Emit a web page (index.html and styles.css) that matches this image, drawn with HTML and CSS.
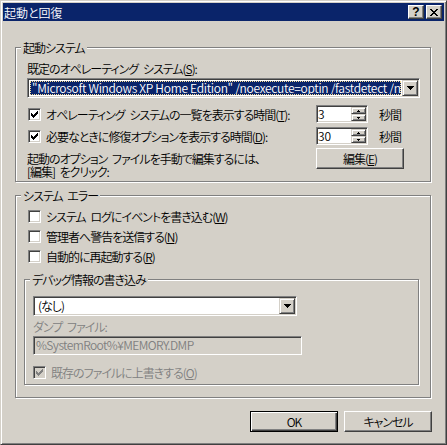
FILE: index.html
```html
<!DOCTYPE html>
<html lang="ja">
  <head>
    <meta charset="UTF-8" />
    <meta name="viewport" content="width=device-width, initial-scale=1.0" />
    <title>起動と回復</title>
    <link rel="stylesheet" href="styles.css">
  </head>
  <body>
    <div class="window">
      <div class="titlebar">
        <span class="title">起動と回復</span>
        <div class="title-buttons">
          <button class="title-btn help">?</button>
          <button class="title-btn close">
            <svg width="8" height="7" viewBox="0 0 8 7">
              <path d="M0 0h2v1h-2z M6 0h2v1h-2z M1 1h2v1h-2z M5 1h2v1h-2z M2 2h4v1h-4z M3 3h2v1h-2z M2 4h4v1h-4z M1 5h2v1h-2z M5 5h2v1h-2z M0 6h2v1h-2z M6 6h2v1h-2z" />
            </svg>
          </button>
        </div>
      </div>

      <div class="client">
        <!-- 起動システム -->
        <fieldset class="group">
          <legend>起動システム</legend>
          <div class="boot">
            <div>既定のオペレーティング システム(<u>S</u>):</div>
            <div class="combo">
              <div class="combo-text focused">"Microsoft Windows XP Home Edition" /noexecute=optin /fastdetect /noguiboot</div>
              <div class="combo-btn">
                <svg width="7" height="4" viewBox="0 0 7 4"><path d="M0 0h7v1h-1v1h-1v1h-1v1h-1v-1h-1v-1h-1v-1h-1z" /></svg>
              </div>
            </div>

            <div class="timer-row first">
              <div class="check-item timer-label">
                <span class="check">
                  <svg width="11" height="11" viewBox="1 1 11 11"><path d="M3 5h1v1h1v1h1v-1h1v-1h1v-1h1v-1h1v3h-1v1h-1v1h-1v1h-1v1h-1v-1h-1v-1h-1z" /></svg>
                </span>
                <span>オペレーティング システムの一覧を表示する時間(<u>T</u>):</span>
              </div>
              <div class="spin">
                <div class="spin-edit">3</div>
                <div class="spin-btns">
                  <div class="spin-btn"><svg width="3" height="2" viewBox="0 0 3 2"><path d="M1 0h1v1h1v1h-3v-1h1z" /></svg></div>
                  <div class="spin-btn"><svg width="3" height="2" viewBox="0 0 3 2"><path d="M0 0h3v1h-1v1h-1v-1h-1z" /></svg></div>
                </div>
              </div>
              <span class="unit">秒間</span>
            </div>

            <div class="timer-row">
              <div class="check-item timer-label">
                <span class="check">
                  <svg width="11" height="11" viewBox="1 1 11 11"><path d="M3 5h1v1h1v1h1v-1h1v-1h1v-1h1v-1h1v3h-1v1h-1v1h-1v1h-1v1h-1v-1h-1v-1h-1z" /></svg>
                </span>
                <span>必要なときに修復オプションを表示する時間(<u>D</u>):</span>
              </div>
              <div class="spin">
                <div class="spin-edit">30</div>
                <div class="spin-btns">
                  <div class="spin-btn"><svg width="3" height="2" viewBox="0 0 3 2"><path d="M1 0h1v1h1v1h-3v-1h1z" /></svg></div>
                  <div class="spin-btn"><svg width="3" height="2" viewBox="0 0 3 2"><path d="M0 0h3v1h-1v1h-1v-1h-1z" /></svg></div>
                </div>
              </div>
              <span class="unit">秒間</span>
            </div>

            <div class="edit-row">
              <div class="edit-note">起動のオプション ファイルを手動で編集するには、<br>[編集] をクリック:</div>
              <button class="btn">編集(<u>E</u>)</button>
            </div>
          </div>
        </fieldset>

        <!-- システム エラー -->
        <fieldset class="group errors">
          <legend>システム エラー</legend>
          <div class="checks">
            <div class="check-item">
              <span class="check"></span>
              <span>システム ログにイベントを書き込む(<u>W</u>)</span>
            </div>
            <div class="check-item">
              <span class="check"></span>
              <span>管理者へ警告を送信する(<u>N</u>)</span>
            </div>
            <div class="check-item">
              <span class="check"></span>
              <span>自動的に再起動する(<u>R</u>)</span>
            </div>
          </div>

          <fieldset class="group debug">
            <legend>デバッグ情報の書き込み</legend>
            <div class="debug-body">
              <div class="combo small">
                <div class="combo-text">(なし)</div>
                <div class="combo-btn">
                  <svg width="7" height="4" viewBox="0 0 7 4"><path d="M0 0h7v1h-1v1h-1v1h-1v1h-1v-1h-1v-1h-1v-1h-1z" /></svg>
                </div>
              </div>
              <div class="disabled dump-label">ダンプ ファイル:</div>
              <div class="field disabled">%SystemRoot%¥MEMORY.DMP</div>
              <div class="check-item overwrite disabled">
                <span class="check off">
                  <svg width="11" height="11" viewBox="1 1 11 11"><path d="M3 5h1v1h1v1h1v-1h1v-1h1v-1h1v-1h1v3h-1v1h-1v1h-1v1h-1v1h-1v-1h-1v-1h-1z" /></svg>
                </span>
                <span>既存のファイルに上書きする(<u>O</u>)</span>
              </div>
            </div>
          </fieldset>
        </fieldset>

        <div class="actions">
          <button class="btn default">OK</button>
          <button class="btn">キャンセル</button>
        </div>
      </div>
    </div>
  </body>
</html>
```

FILE: styles.css
```css
body {
  margin: 0;
  background-color: #d4d0c8;
  font-family: "Noto Sans CJK JP", sans-serif;
  font-size: 12px;
  font-weight: 350;
  line-height: 13px;
  letter-spacing: -1px;
  word-spacing: 3px;
  font-feature-settings: "palt";
  color: #000;
}

button {
  font: inherit;
  font-feature-settings: "palt";
  letter-spacing: inherit;
  word-spacing: inherit;
  color: #000;
  padding: 0;
}

svg {
  display: block;
  shape-rendering: crispEdges;
}

.window {
  width: 447px;
  height: 445px;
  box-sizing: border-box;
  border: 1px solid;
  border-color: #d4d0c8 #404040 #404040 #d4d0c8;
  box-shadow: inset 1px 1px #fff, inset -1px -1px #808080;
  padding: 2px;
}

/* title bar */
.titlebar {
  display: flex;
  align-items: center;
  justify-content: space-between;
  height: 18px;
  padding-left: 1px;
  background-color: #0a246a;
  color: #fff;
}

.title {
  letter-spacing: 0;
}

.title-buttons {
  display: flex;
  gap: 2px;
  margin-right: 2px;
}

.title-btn {
  display: flex;
  align-items: center;
  justify-content: center;
  width: 16px;
  height: 14px;
  box-sizing: border-box;
  border: 1px solid;
  border-color: #fff #404040 #404040 #fff;
  box-shadow: inset -1px -1px #808080;
  background-color: #d4d0c8;
}

.title-btn.help {
  font-family: "Liberation Sans", sans-serif;
  font-weight: bold;
  font-size: 12px;
  line-height: 1;
  letter-spacing: 0;
}

/* client area */
.client {
  padding: 20px 13px 0 12px;
}

.group {
  margin: 0;
  padding: 0;
  min-width: 0;
  border: 1px solid #808080;
  box-shadow: inset 1px 1px #fff, 1px 1px #fff;
}

.group legend {
  margin-left: 5px;
  padding: 0 2px;
  line-height: 13px;
  background-color: #d4d0c8;
}

.errors {
  margin-top: 7px;
}

.boot {
  padding: 8px 10px 3px 11px;
}

.checks {
  display: flex;
  flex-direction: column;
  gap: 3px;
  padding: 6px 0 0 11px;
}

.debug {
  margin: 8px 11px 12px 8px;
}

.debug-body {
  padding: 10px 0 3px 8px;
}

/* controls */
.combo {
  display: flex;
  height: 20px;
  box-sizing: border-box;
  margin-top: 3px;
  padding: 1px;
  border: 1px solid;
  border-color: #808080 #fff #fff #808080;
  box-shadow: inset 1px 1px #404040, inset -1px -1px #d4d0c8;
  background-color: #fff;
}

.combo.small {
  width: 264px;
  margin-top: 0;
}

.combo-text {
  flex: 1;
  min-width: 0;
  margin: 1px;
  padding: 0 2px;
  line-height: 14px;
  white-space: nowrap;
}

.combo-text.focused {
  padding: 0 1px;
  line-height: 12px;
  letter-spacing: -0.3px;
  word-spacing: 0;
  overflow: hidden;
  border: 1px dotted #f5db95;
  background-color: #0a246a;
  color: #fff;
}

.combo-btn {
  display: flex;
  align-items: center;
  justify-content: center;
  flex: none;
  width: 16px;
  height: 16px;
  box-sizing: border-box;
  border: 1px solid;
  border-color: #d4d0c8 #404040 #404040 #d4d0c8;
  box-shadow: inset 1px 1px #fff, inset -1px -1px #808080;
  background-color: #d4d0c8;
}

.check-item {
  display: flex;
  align-items: center;
  height: 17px;
}

.check {
  flex: none;
  width: 13px;
  height: 13px;
  box-sizing: border-box;
  margin: 0 5px 0 1px;
  border: 1px solid;
  border-color: #808080 #fff #fff #808080;
  box-shadow: inset 1px 1px #404040, inset -1px -1px #d4d0c8;
  background-color: #fff;
}

.check.off {
  background-color: #d4d0c8;
  fill: #808080;
}

.timer-row {
  display: flex;
  align-items: center;
  margin-top: 4px;
}

.timer-row.first {
  margin-top: 7px;
}

.timer-label {
  width: 289px;
}

.spin {
  display: flex;
  width: 52px;
  height: 18px;
  box-sizing: border-box;
  padding: 1px;
  border: 1px solid;
  border-color: #808080 #fff #fff #808080;
  box-shadow: inset 1px 1px #404040, inset -1px -1px #d4d0c8;
  background-color: #fff;
}

.spin-edit {
  flex: 1;
  line-height: 14px;
  letter-spacing: 0;
}

.spin-btns {
  width: 15px;
}

.spin-btn {
  display: flex;
  align-items: center;
  justify-content: center;
  height: 7px;
  box-sizing: border-box;
  border: 1px solid;
  border-color: #d4d0c8 #404040 #404040 #d4d0c8;
  box-shadow: inset 1px 1px #fff, inset -1px -1px #808080;
  background-color: #d4d0c8;
}

.unit {
  margin-left: 11px;
}

.edit-row {
  display: flex;
  margin-top: 3px;
}

.edit-note {
  width: 289px;
  margin-top: 4px;
}

.btn {
  width: 88px;
  height: 21px;
  box-sizing: border-box;
  border: 1px solid;
  border-color: #fff #404040 #404040 #fff;
  box-shadow: inset -1px -1px #808080;
  background-color: #d4d0c8;
}

.btn.default {
  border-color: #000;
  box-shadow: inset 1px 1px #fff, inset -1px -1px #404040, inset -2px -2px #808080;
}

.disabled {
  color: #808080;
}

.dump-label {
  margin-top: 4px;
}

.field {
  width: 269px;
  height: 19px;
  box-sizing: border-box;
  margin-top: 3px;
  padding: 0 2px;
  line-height: 15px;
  letter-spacing: -0.6px;
  border: 1px solid;
  border-color: #808080 #fff #fff #808080;
  box-shadow: inset 1px 1px #404040, inset -1px -1px #d4d0c8;
}

.overwrite {
  margin-top: 9px;
}

.overwrite .check {
  margin-left: 0;
}

.actions {
  display: flex;
  justify-content: flex-end;
  gap: 6px;
  margin-top: 13px;
  margin-right: -1px;
}
```
